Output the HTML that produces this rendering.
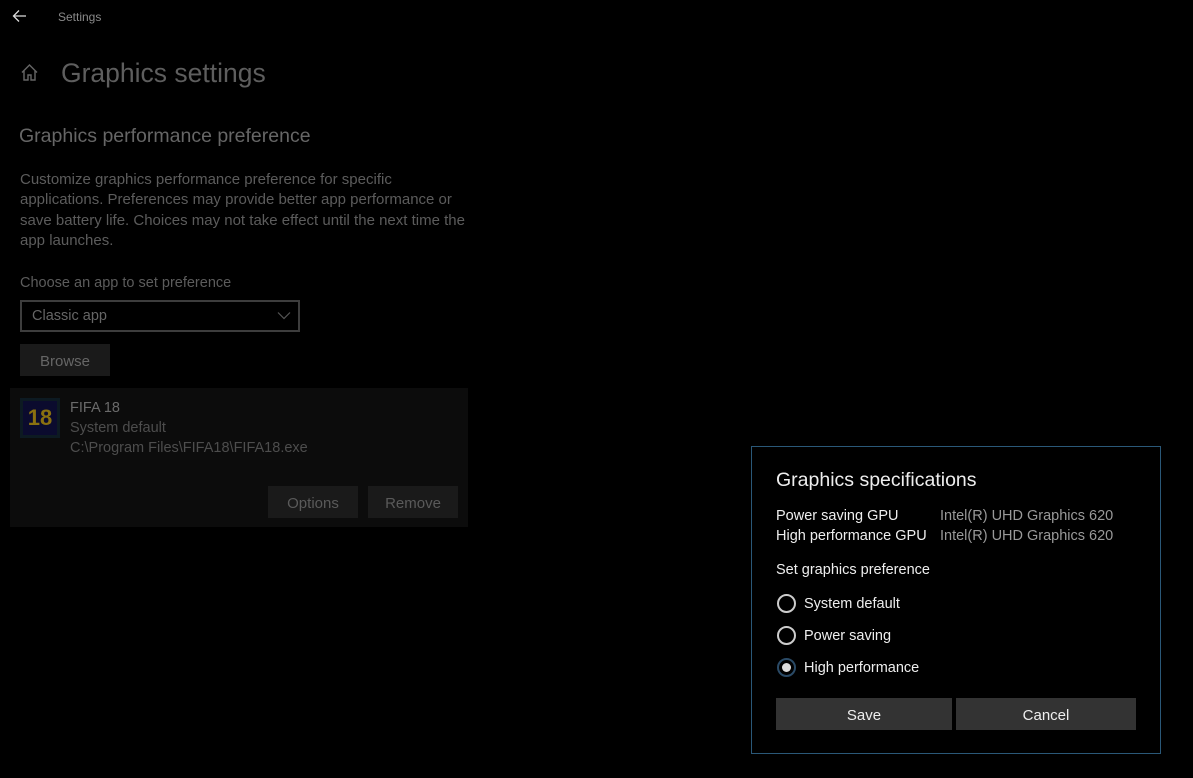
<!DOCTYPE html>
<html><head><style>
*{margin:0;padding:0;box-sizing:border-box}
body{width:1193px;height:778px;background:#000;font-family:"Liberation Sans",sans-serif;position:relative;overflow:hidden}
.a{position:absolute;white-space:nowrap}
.btn{position:absolute;display:flex;align-items:center;justify-content:center;font-size:15px}
.r{position:absolute;left:777px;width:19px;height:19px;border-radius:50%;border:2px solid #ccc}
</style></head><body>
<svg class="a" style="left:12px;top:9px" width="15" height="14" viewBox="0 0 15 14"><path d="M14 7H2M7 1.5L1.5 7 7 12.5" stroke="#ddd" stroke-width="1.3" fill="none"/></svg>
<div class="a" style="left:58px;top:10px;font-size:12px;color:#8a8a8a">Settings</div>
<svg class="a" style="left:20px;top:63px" width="19" height="19" viewBox="0 0 19 19"><path d="M2 9.5L9.5 2 17 9.5M4 8v9h4v-5h3v5h4V8" stroke="#666" stroke-width="1.4" fill="none"/></svg>
<div class="a" style="left:61px;top:58px;font-size:26.5px;color:#5e5e5e">Graphics settings</div>
<div class="a" style="left:19px;top:125px;font-size:19.5px;color:#666">Graphics performance preference</div>
<div class="a" style="left:20px;top:170px;font-size:15px;line-height:20.3px;color:#5c5c5c">Customize graphics performance preference for specific<br>applications. Preferences may provide better app performance or<br>save battery life. Choices may not take effect until the next time the<br>app launches.</div>
<div class="a" style="left:20px;top:275px;font-size:14.5px;color:#5c5c5c">Choose an app to set preference</div>
<div class="a" style="left:20px;top:300px;width:280px;height:32px;border:2px solid #3d3d3d"></div>
<div class="a" style="left:32px;top:308px;font-size:14.5px;color:#666">Classic app</div>
<svg class="a" style="left:277px;top:311px" width="14" height="9" viewBox="0 0 14 9"><path d="M1 1.5L7 7.5 13 1.5" stroke="#555" stroke-width="1.2" fill="none"/></svg>
<div class="btn" style="left:20px;top:344px;width:90px;height:32px;background:#1a1a1a;color:#666;padding-top:2px">Browse</div>
<div class="a" style="left:10px;top:388px;width:458px;height:139px;background:#0c0c0c"></div>
<div class="a" style="left:20px;top:398px;width:40px;height:40px;background:#0d1a22;display:flex;align-items:center;justify-content:center"><div style="width:34px;height:34px;background:#0b0b2e;color:#8a7010;font-weight:bold;font-size:22px;text-align:center;line-height:34px">18</div></div>
<div class="a" style="left:70px;top:400px;font-size:14.5px;color:#6a6a6a">FIFA 18</div>
<div class="a" style="left:70px;top:420px;font-size:14.5px;color:#4d4d4d">System default</div>
<div class="a" style="left:70px;top:440px;font-size:14.5px;color:#4d4d4d">C:\Program Files\FIFA18\FIFA18.exe</div>
<div class="btn" style="left:268px;top:486px;width:90px;height:32px;background:#1a1a1a;color:#5a5a5a;padding-top:2px">Options</div>
<div class="btn" style="left:368px;top:486px;width:90px;height:32px;background:#1a1a1a;color:#5a5a5a;padding-top:2px">Remove</div>

<div class="a" style="left:751px;top:446px;width:410px;height:308px;border:1px solid #2a5878;background:#000"></div>
<div class="a" style="left:776px;top:469px;font-size:19.5px;color:#eee">Graphics specifications</div>
<div class="a" style="left:776px;top:506px;font-size:14.5px;color:#eee;line-height:20px">Power saving GPU<br>High performance GPU</div>
<div class="a" style="left:940px;top:506px;font-size:14.5px;color:#999;line-height:20px">Intel(R) UHD Graphics 620<br>Intel(R) UHD Graphics 620</div>
<div class="a" style="left:776px;top:562px;font-size:14.5px;color:#eee">Set graphics preference</div>
<div class="r" style="top:594px"></div>
<div class="a" style="left:804px;top:596px;font-size:14.5px;color:#eee">System default</div>
<div class="r" style="top:626px"></div>
<div class="a" style="left:804px;top:628px;font-size:14.5px;color:#eee">Power saving</div>
<div class="r" style="top:658px;border-color:#2a4a66;display:flex;align-items:center;justify-content:center"><div style="width:9px;height:9px;border-radius:50%;background:#ddd"></div></div>
<div class="a" style="left:804px;top:660px;font-size:14.5px;color:#eee">High performance</div>
<div class="btn" style="left:776px;top:698px;width:176px;height:32px;background:#333;color:#eee;padding-top:2px">Save</div>
<div class="btn" style="left:956px;top:698px;width:180px;height:32px;background:#333;color:#eee;padding-top:2px">Cancel</div>
</body></html>
